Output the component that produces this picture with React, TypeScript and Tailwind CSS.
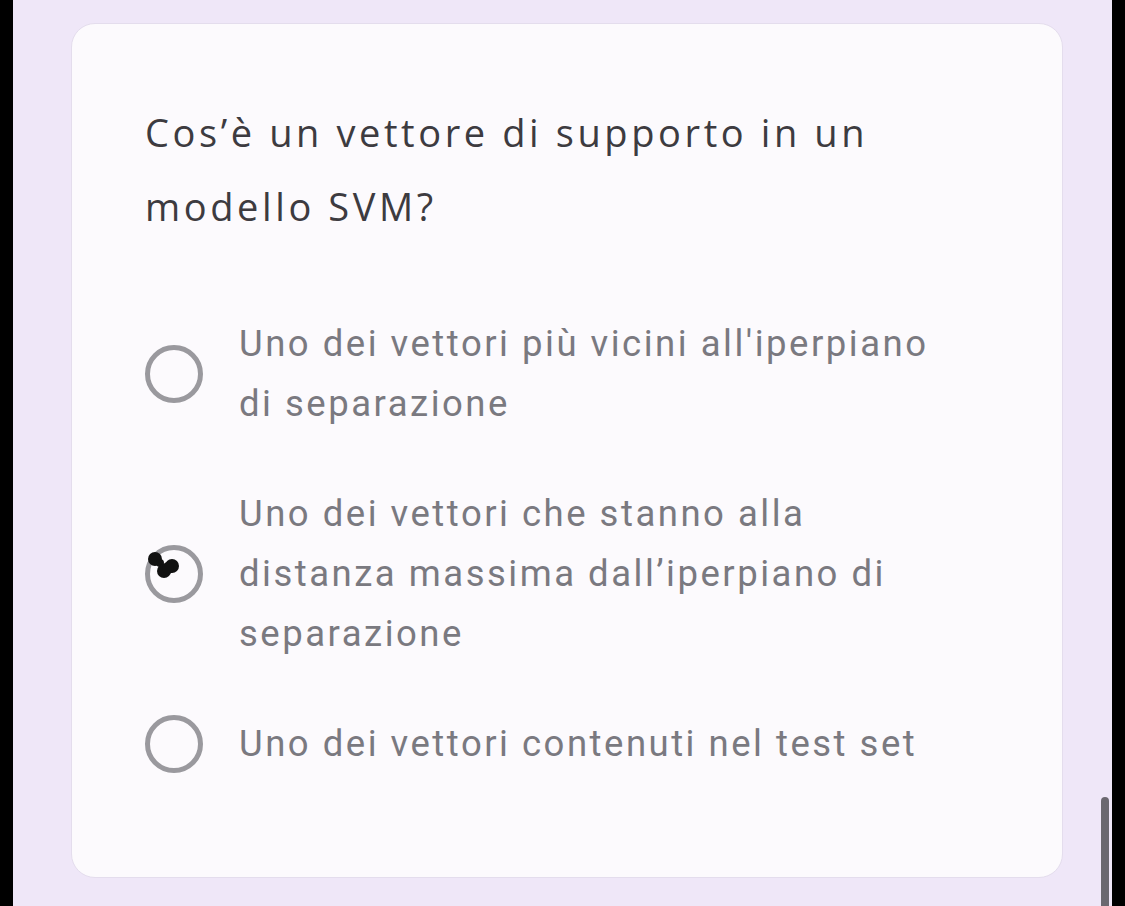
import React, { useState } from 'react';

const options = [
  "Uno dei vettori più vicini all'iperpiano di separazione",
  'Uno dei vettori che stanno alla distanza massima dall’iperpiano di separazione',
  'Uno dei vettori contenuti nel test set',
];

const Radio = ({ checked }: { checked: boolean }) => (
  <div className="relative w-[58px] h-[58px] shrink-0 rounded-full border-[5px] border-[#9a999e]">
    {checked && (
      <svg className="absolute -left-[10px] -top-[10px]" width="60" height="60" viewBox="0 0 60 60">
        <circle cx="15" cy="19" r="7" fill="#111" />
        <circle cx="20" cy="23" r="4" fill="#111" />
        <circle cx="24" cy="31" r="7" fill="#111" />
        <circle cx="32" cy="26" r="7" fill="#111" />
        <circle cx="28" cy="28" r="6" fill="#111" />
      </svg>
    )}
  </div>
);

const App = () => {
  const [selected, setSelected] = useState(1);

  return (
    <div className="flex w-[1125px] h-[906px] overflow-hidden bg-[#000]">
      <div className="w-[13px] h-full shrink-0 bg-[#000]" />
      <div className="relative flex-1 bg-[#efe7f8] pl-[58px] pr-[49px] pt-[23px]">
        <div className="h-[855px] rounded-[24px] border border-[#e4dded] bg-[#fcfafd] pl-[73px] pr-[60px] pt-[71px]">
          <h1 className="text-[38px] leading-[74px] tracking-[3.6px] text-[#3d3b40] font-['Open_Sans',sans-serif] max-w-[760px]">
            Cos’è un vettore di supporto in un modello SVM?
          </h1>
          <div className="mt-[71px] flex flex-col gap-[50px]">
            {options.map((o, i) => (
              <div
                key={i}
                className="flex items-center cursor-pointer"
                onClick={() => setSelected(i)}
              >
                <div className="w-[94px] flex shrink-0">
                  <Radio checked={selected === i} />
                </div>
                <p className="max-w-[710px] text-[36.5px] leading-[60px] tracking-[2.5px] text-[#7a7980] font-['Roboto',sans-serif]">
                  {o}
                </p>
              </div>
            ))}
          </div>
        </div>
        <div className="absolute right-[3px] top-[797px] w-[8px] h-[120px] rounded-full bg-[#6b6870]" />
      </div>
      <div className="w-[13px] h-full shrink-0 bg-[#000]" />
    </div>
  );
};

export default App;
